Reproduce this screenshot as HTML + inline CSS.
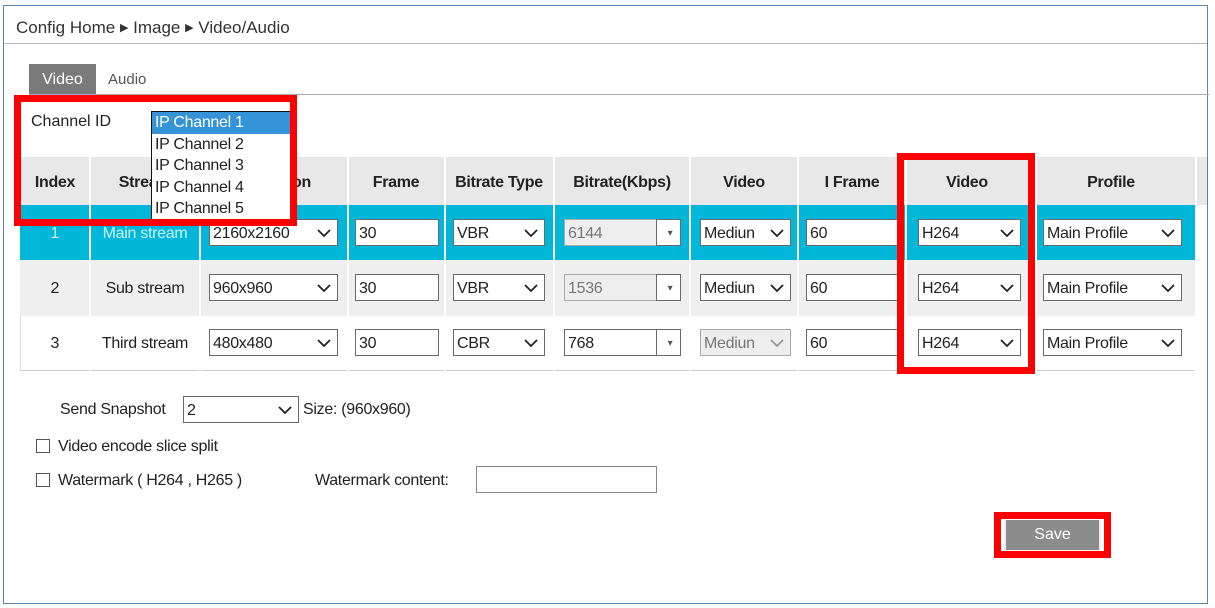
<!DOCTYPE html>
<html><head><meta charset="utf-8"><style>
*{margin:0;padding:0;box-sizing:border-box}
body{width:1215px;height:608px;background:#fff;position:relative;overflow:hidden;font-family:"Liberation Sans",sans-serif;font-size:16px;color:#222}
.a{position:absolute;white-space:nowrap}
.sel,.inp{position:absolute;height:27px;border:1px solid #6a6a6a;background:#fff;padding-left:3px;line-height:27px;font-size:16px;letter-spacing:-0.3px;overflow:hidden}
.sel svg{position:absolute;right:6px;top:9px}
.dis{background:#eee;color:#777;border-color:#aaa}
.th{position:absolute;top:159px;height:48px;line-height:48px;text-align:center;font-weight:bold;font-size:16px;letter-spacing:-0.3px}
.vl{position:absolute;width:2px;background:#fff}
.red{position:absolute;border:7px solid #f00}
.cb{position:absolute;width:14px;height:14px;border:1px solid #555;background:#fff}
</style></head><body>
<div class="a" style="left:3px;top:5px;width:1205px;height:599px;border:1px solid #5b87a6"></div>
<div class="a" style="left:16px;top:18px;font-size:17px;color:#333">Config Home <span style="font-size:11px;vertical-align:2px">▶</span> Image <span style="font-size:11px;vertical-align:2px">▶</span> Video/Audio</div>
<div class="a" style="left:4px;top:43px;width:1203px;height:1px;background:#bbb"></div>
<div class="a" style="left:29px;top:64px;width:67px;height:30px;background:#7a7a7a;color:#fff;text-align:center;line-height:31px;font-size:16px">Video</div>
<div class="a" style="left:108px;top:71px;font-size:15px;color:#555">Audio</div>
<div class="a" style="left:29px;top:94px;width:1180px;height:1px;background:#aaa"></div>
<div class="a" style="left:31px;top:113px;font-size:16px">Channel ID</div>

<div class="a" style="left:20px;top:157px;width:1187px;height:48px;background:#e8e8e8"></div>
<div class="a" style="left:20px;top:205px;width:1177px;height:55px;background:#00b7d9"></div>
<div class="a" style="left:20px;top:260px;width:1177px;height:56px;background:#efefef"></div>
<div class="a" style="left:20px;top:316px;width:1177px;height:55px;background:#fff;border-bottom:1px solid #ccc;border-left:1px solid #ddd"></div>
<div class="vl" style="left:89px;top:157px;height:214px"></div>
<div class="vl" style="left:199px;top:157px;height:214px"></div>
<div class="vl" style="left:347px;top:157px;height:214px"></div>
<div class="vl" style="left:444px;top:157px;height:214px"></div>
<div class="vl" style="left:553px;top:157px;height:214px"></div>
<div class="vl" style="left:689px;top:157px;height:214px"></div>
<div class="vl" style="left:797px;top:157px;height:214px"></div>
<div class="vl" style="left:905px;top:157px;height:214px"></div>
<div class="vl" style="left:1035px;top:157px;height:214px"></div>
<div class="vl" style="left:1195px;top:157px;height:214px"></div>
<div class="th" style="left:20px;width:70px">Index</div>
<div class="th" style="left:90px;width:110px">Stream</div>
<div class="th" style="left:292px;width:40px;text-align:left">on</div>
<div class="th" style="left:348px;width:96px">Frame</div>
<div class="th" style="left:444px;width:110px">Bitrate Type</div>
<div class="th" style="left:554px;width:136px">Bitrate(Kbps)</div>
<div class="th" style="left:690px;width:108px">Video</div>
<div class="th" style="left:798px;width:108px">I Frame</div>
<div class="th" style="left:906px;width:122px">Video</div>
<div class="th" style="left:1036px;width:150px">Profile</div>

<div class="a" style="left:20px;top:225px;width:70px;text-align:center;color:#cdf3fb">1</div>
<div class="a" style="left:90px;top:225px;width:110px;text-align:center;color:#cdf3fb;letter-spacing:-0.3px">Main stream</div>
<div class="a" style="left:20px;top:280px;width:70px;text-align:center">2</div>
<div class="a" style="left:90px;top:280px;width:110px;text-align:center;letter-spacing:-0.3px">Sub stream</div>
<div class="a" style="left:20px;top:335px;width:70px;text-align:center">3</div>
<div class="a" style="left:90px;top:335px;width:110px;text-align:center;letter-spacing:-0.3px">Third stream</div>

<div class="sel" style="left:209px;top:219px;width:129px">2160x2160<svg width="14" height="9"><path d="M1 1L7 7L13 1" stroke="#222" stroke-width="1.8" fill="none"/></svg></div>
<div class="sel" style="left:209px;top:274px;width:129px">960x960<svg width="14" height="9"><path d="M1 1L7 7L13 1" stroke="#222" stroke-width="1.8" fill="none"/></svg></div>
<div class="sel" style="left:209px;top:329px;width:129px">480x480<svg width="14" height="9"><path d="M1 1L7 7L13 1" stroke="#222" stroke-width="1.8" fill="none"/></svg></div>
<div class="inp" style="left:355px;top:219px;width:84px">30</div>
<div class="inp" style="left:355px;top:274px;width:84px">30</div>
<div class="inp" style="left:355px;top:329px;width:84px">30</div>
<div class="sel" style="left:453px;top:219px;width:92px">VBR<svg width="14" height="9"><path d="M1 1L7 7L13 1" stroke="#222" stroke-width="1.8" fill="none"/></svg></div>
<div class="sel" style="left:453px;top:274px;width:92px">VBR<svg width="14" height="9"><path d="M1 1L7 7L13 1" stroke="#222" stroke-width="1.8" fill="none"/></svg></div>
<div class="sel" style="left:453px;top:329px;width:92px">CBR<svg width="14" height="9"><path d="M1 1L7 7L13 1" stroke="#222" stroke-width="1.8" fill="none"/></svg></div>
<div class="inp dis" style="left:564px;top:219px;width:93px">6144</div>
<div class="inp" style="left:656px;top:219px;width:25px;text-align:center;font-size:10px;color:#555">▾</div>
<div class="inp dis" style="left:564px;top:274px;width:93px">1536</div>
<div class="inp" style="left:656px;top:274px;width:25px;text-align:center;font-size:10px;color:#555">▾</div>
<div class="inp" style="left:564px;top:329px;width:93px">768</div>
<div class="inp" style="left:656px;top:329px;width:25px;text-align:center;font-size:10px;color:#555">▾</div>
<div class="sel" style="left:700px;top:219px;width:91px">Mediun<svg width="14" height="9"><path d="M1 1L7 7L13 1" stroke="#222" stroke-width="1.8" fill="none"/></svg></div>
<div class="sel" style="left:700px;top:274px;width:91px">Mediun<svg width="14" height="9"><path d="M1 1L7 7L13 1" stroke="#222" stroke-width="1.8" fill="none"/></svg></div>
<div class="sel dis" style="left:700px;top:329px;width:91px">Mediun<svg width="14" height="9"><path d="M1 1L7 7L13 1" stroke="#999" stroke-width="1.8" fill="none"/></svg></div>
<div class="inp" style="left:806px;top:219px;width:94px">60</div>
<div class="inp" style="left:806px;top:274px;width:94px">60</div>
<div class="inp" style="left:806px;top:329px;width:94px">60</div>
<div class="sel" style="left:918px;top:219px;width:103px">H264<svg width="14" height="9"><path d="M1 1L7 7L13 1" stroke="#222" stroke-width="1.8" fill="none"/></svg></div>
<div class="sel" style="left:918px;top:274px;width:103px">H264<svg width="14" height="9"><path d="M1 1L7 7L13 1" stroke="#222" stroke-width="1.8" fill="none"/></svg></div>
<div class="sel" style="left:918px;top:329px;width:103px">H264<svg width="14" height="9"><path d="M1 1L7 7L13 1" stroke="#222" stroke-width="1.8" fill="none"/></svg></div>
<div class="sel" style="left:1043px;top:219px;width:139px">Main Profile<svg width="14" height="9"><path d="M1 1L7 7L13 1" stroke="#222" stroke-width="1.8" fill="none"/></svg></div>
<div class="sel" style="left:1043px;top:274px;width:139px">Main Profile<svg width="14" height="9"><path d="M1 1L7 7L13 1" stroke="#222" stroke-width="1.8" fill="none"/></svg></div>
<div class="sel" style="left:1043px;top:329px;width:139px">Main Profile<svg width="14" height="9"><path d="M1 1L7 7L13 1" stroke="#222" stroke-width="1.8" fill="none"/></svg></div>

<div class="a" style="left:151px;top:111px;width:140px;height:110px;background:#fff;border:1px solid #111;font-size:16px;line-height:21.5px;letter-spacing:-0.3px">
<div style="background:#3594d8;color:#fff;padding-left:3px">IP Channel 1</div>
<div style="padding-left:3px">IP Channel 2</div>
<div style="padding-left:3px">IP Channel 3</div>
<div style="padding-left:3px">IP Channel 4</div>
<div style="padding-left:3px">IP Channel 5</div>
</div>

<div class="red" style="left:14px;top:95px;width:283px;height:131px"></div>
<div class="red" style="left:897px;top:153px;width:138px;height:221px"></div>

<div class="a" style="left:60px;top:401px;letter-spacing:-0.3px">Send Snapshot</div>
<div class="sel" style="left:183px;top:396px;width:116px">2<svg width="14" height="9"><path d="M1 1L7 7L13 1" stroke="#222" stroke-width="1.8" fill="none"/></svg></div>
<div class="a" style="left:303px;top:401px;letter-spacing:-0.3px">Size: (960x960)</div>
<div class="cb" style="left:36px;top:439px"></div>
<div class="a" style="left:58px;top:438px;letter-spacing:-0.3px">Video encode slice split</div>
<div class="cb" style="left:36px;top:473px"></div>
<div class="a" style="left:58px;top:472px;letter-spacing:-0.3px">Watermark ( H264 , H265 )</div>
<div class="a" style="left:315px;top:472px;letter-spacing:-0.3px">Watermark content:</div>
<div class="inp" style="left:476px;top:466px;width:181px;border-color:#888"></div>

<div class="red" style="left:994px;top:512px;width:117px;height:46px"></div>
<div class="a" style="left:1004px;top:520px;width:97px;height:30px;background:#8c8c8c;border-left:2px solid #eee;border-right:2px solid #eee;color:#fff;text-align:center;line-height:30px;font-size:16px">Save</div>
</body></html>
